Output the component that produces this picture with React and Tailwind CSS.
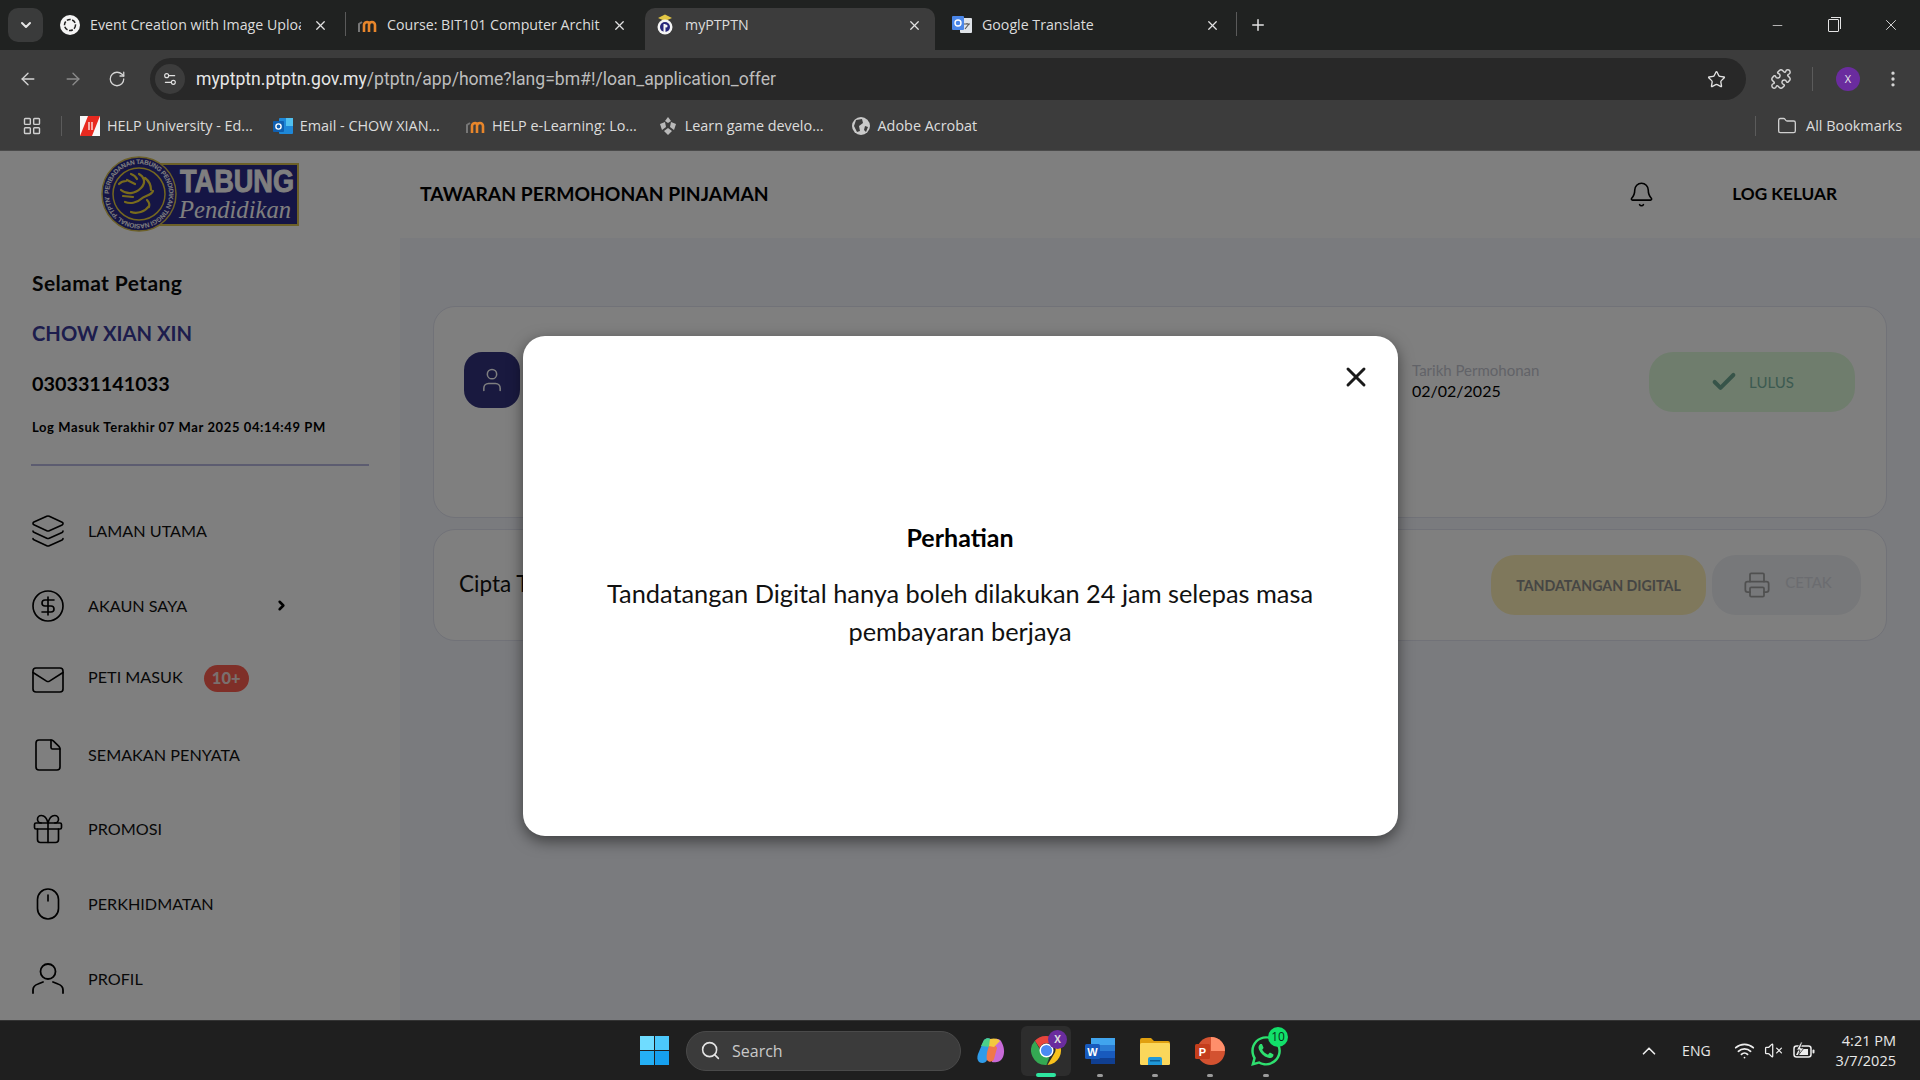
import {
  ArrowLeft, ArrowRight, Bell, Check, ChevronDown, ChevronRight, ChevronUp, CircleDollarSign,
  File, Folder, Gift, Layers, LayoutGrid, Mail, Minus, MoreVertical, Mouse, Plus, Printer, Puzzle, RotateCw,
  Search, Settings2, Star, User, VolumeX, Wifi, X,
} from "lucide-react";
import { FaWhatsapp } from "react-icons/fa";

const uiFont = "font-['Open_Sans','Noto_Sans',sans-serif]";
const pageFont = "font-['Lato','Open_Sans',sans-serif]";

function OpenAiIcon() {
  return (
    <svg width="20" height="20" viewBox="0 0 20 20">
      <circle cx="10" cy="10" r="10" fill="#f4f4f4" />
      <circle cx="10" cy="10" r="5.5" fill="none" stroke="#222" strokeWidth="1.5" strokeDasharray="4 1.5" />
    </svg>
  );
}

function MoodleIcon() {
  return (
    <svg width="20" height="16" viewBox="0 0 20 16">
      <path d="M7 15V8a3 3 0 0 1 5.500-1.500M12 15V8a3 3 0 0 1 6 0v7" fill="none" stroke="#e8862b" strokeWidth="2.6" />
      <path d="M2 15V7l3-2" fill="none" stroke="#777" strokeWidth="2" />
    </svg>
  );
}

function PtptnIcon() {
  return (
    <svg width="20" height="22" viewBox="0 0 20 22">
      <path d="M3 4 L10 0.500 L17 4 L10 7Z" fill="#e2c644" />
      <circle cx="10" cy="13" r="7.500" fill="#f5f5f5" />
      <circle cx="10" cy="13" r="5" fill="#27267a" />
      <rect x="8.500" y="10" width="2" height="8" fill="#f5f5f5" />
      <circle cx="11" cy="12" r="1.600" fill="#f5f5f5" />
    </svg>
  );
}

function TranslateIcon() {
  return (
    <svg width="20" height="20" viewBox="0 0 20 20">
      <rect x="8" y="3" width="12" height="15" rx="1" fill="#dfe3e8" />
      <rect x="0" y="1" width="12" height="14" rx="1" fill="#4a86e8" />
      <circle cx="6" cy="8" r="3" fill="none" stroke="#fff" strokeWidth="1.400" />
      <path d="M12 9h6M15 8v1M13 14l4-5" stroke="#555" strokeWidth="1.100" fill="none" />
    </svg>
  );
}

function HelpIcon() {
  return (
    <svg width="20" height="20" viewBox="0 0 20 20">
      <rect width="20" height="20" fill="#f8f8f8" />
      <path d="M0 20 L8 0 H20 L12 20Z" fill="#e8291f" />
      <path d="M9 6v8M12 6v8" stroke="#fff" strokeWidth="1.200" />
    </svg>
  );
}

function OutlookIcon() {
  return (
    <svg width="20" height="20" viewBox="0 0 20 20">
      <rect x="6" y="2" width="14" height="16" rx="1" fill="#1e88d8" />
      <rect x="13" y="2" width="7" height="8" fill="#50c0ef" />
      <rect x="0" y="5" width="11" height="11" rx="1" fill="#0f5fb0" />
      <circle cx="5.500" cy="10.500" r="2.600" fill="none" stroke="#fff" strokeWidth="1.400" />
    </svg>
  );
}

function UnityIcon() {
  return (
    <svg width="20" height="20" viewBox="0 0 20 20" fill="#b9b9b9">
      <path d="M10 1 L13 5 L10 7 L7 5Z M2 8 L7 6 L8 11 L4 14Z M18 8 L13 6 L12 11 L16 14Z M10 19 L6 15 L10 12 L14 15Z" />
    </svg>
  );
}

function GlobeIcon() {
  return (
    <svg width="20" height="20" viewBox="0 0 20 20">
      <circle cx="10" cy="10" r="9" fill="#c9c9c9" />
      <path d="M5 4 L11 3 L12 7 L8 10 L9 15 L6 16 L3 10Z M14 10 L17 11 L15 16 L13 14Z" fill="#3c3c3c" />
    </svg>
  );
}

function Tab({ icon, title, active, separator, className }) {
  return (
    <div
      className={`relative flex h-[42px] shrink-0 items-center pb-[8px] pl-[15px] pr-[17px] ${active ? "rounded-t-[10px] bg-[#3c3c3c]" : ""} ${className}`}
    >
      <span className="flex w-[20px] justify-center">{icon}</span>
      <span className="ml-[10px] min-w-0 flex-1 overflow-hidden whitespace-nowrap text-[14.2px] text-[#dcdcdc]">{title}</span>
      <X size={15} strokeWidth={2} className="ml-[12px] shrink-0 text-[#e2e2e2]" />
      {separator && <span className="absolute right-[-1px] top-[4px] h-[24px] w-px bg-[#5a5a5a]" />}
    </div>
  );
}

function TabStrip() {
  return (
    <div className={`flex h-[50px] shrink-0 items-end bg-[#202221] ${uiFont}`}>
      <div className="mb-[8px] ml-[8px] flex h-[34px] w-[35px] items-center justify-center rounded-[10px] bg-[#3a3b3b]">
        <ChevronDown size={16} strokeWidth={3} className="text-[#e6e6e6]" />
      </div>
      <Tab icon={<OpenAiIcon />} title="Event Creation with Image Upload" separator className="ml-[2px] w-[300px]" />
      <Tab icon={<MoodleIcon />} title="Course: BIT101 Computer Architecture" className="w-[299px] !pl-[12px]" />
      <Tab icon={<PtptnIcon />} title="myPTPTN" active className="ml-[1px] w-[290px] !pl-[10px] !pr-[13px]" />
      <Tab icon={<TranslateIcon />} title="Google Translate" separator className="w-[301px] !pl-[17px] !pr-[16px]" />
      <Plus size={18} strokeWidth={2} className="mb-[16px] ml-[13px] text-[#e2e2e2]" />
      <div className="flex-1" />
      <div className="mb-[16px] mr-[20px] flex items-center gap-[43px] text-[#e4e4e4]">
        <Minus size={15} strokeWidth={1.2} />
        <div className="relative h-[13px] w-[11px] rounded-[1px] border border-[#e4e4e4] after:absolute after:left-[2px] after:top-[-3px] after:h-[12px] after:w-[10px] after:border-r after:border-t after:border-[#e4e4e4]" />
        <X size={18} strokeWidth={1.2} />
      </div>
    </div>
  );
}

function Toolbar() {
  return (
    <div className={`flex h-[58px] shrink-0 items-start bg-[#3c3c3c] pt-[8px] ${uiFont}`}>
      <div className="flex h-[42px] items-center gap-[25px] pl-[18px] text-[#d5d5d5]">
        <ArrowLeft size={20} strokeWidth={1.6} />
        <ArrowRight size={20} strokeWidth={1.6} className="text-[#8b8b8b]" />
        <RotateCw size={18} strokeWidth={1.7} />
      </div>
      <div className="ml-[24px] flex h-[42px] w-[1596px] items-center rounded-full bg-[#282828] pl-[5px] pr-[20px]">
        <span className="flex h-[30px] w-[30px] items-center justify-center rounded-full bg-[#3c3c3c]">
          <Settings2 size={16} strokeWidth={1.7} className="text-[#e2e2e2]" />
        </span>
        <span className="ml-[11px] mt-[1px] flex-1 font-['Roboto',sans-serif] text-[17.6px] text-[#e6e6e6]">
          myptptn.ptptn.gov.my<span className="text-[#bdbdbd]">/ptptn/app/home?lang=bm#!/loan_application_offer</span>
        </span>
        <Star size={19} strokeWidth={1.7} className="text-[#e2e2e2]" />
      </div>
      <div className="flex h-[42px] flex-1 items-center pl-[24px] text-[#d5d5d5]">
        <Puzzle size={22} strokeWidth={1.6} />
        <span className="ml-[20px] h-[24px] w-px bg-[#5b5b5b]" />
        <span className="ml-[23px] flex h-[24px] w-[24px] items-center justify-center rounded-full bg-[#6a2c9e] text-[11px] text-[#e8e8e8]">X</span>
        <MoreVertical size={20} strokeWidth={2} className="ml-[23px]" />
      </div>
    </div>
  );
}

function Bookmark({ icon, label, className }) {
  return (
    <div className={`flex items-center gap-[7px] ${className}`}>
      {icon}
      <span className="whitespace-nowrap text-[14.4px] text-[#dcdcdc]">{label}</span>
    </div>
  );
}

function BookmarksBar() {
  return (
    <div className={`flex h-[43px] shrink-0 items-start border-b border-[#4a4a4a] bg-[#3c3c3c] ${uiFont}`}>
      <div className="flex h-[36px] items-center">
        <LayoutGrid size={20} strokeWidth={1.7} className="ml-[22px] text-[#cfcfcf]" />
        <span className="ml-[19px] h-[20px] w-px bg-[#5b5b5b]" />
        <Bookmark icon={<HelpIcon />} label="HELP University - Ed..." className="ml-[18px]" />
        <Bookmark icon={<OutlookIcon />} label="Email - CHOW XIAN..." className="ml-[20px]" />
        <Bookmark icon={<MoodleIcon />} label="HELP e-Learning: Lo..." className="ml-[25px]" />
        <Bookmark icon={<UnityIcon />} label="Learn game develo..." className="ml-[21px]" />
        <Bookmark icon={<GlobeIcon />} label="Adobe Acrobat" className="ml-[27px]" />
      </div>
      <div className="flex-1" />
      <div className="flex h-[36px] items-center pr-[18px]">
        <span className="mr-[21px] h-[20px] w-px bg-[#5b5b5b]" />
        <Folder size={20} strokeWidth={1.6} className="mr-[9px] text-[#cfcfcf]" />
        <span className="text-[14.4px] text-[#dcdcdc]">All Bookmarks</span>
      </div>
    </div>
  );
}

function Logo() {
  return (
    <svg width="198" height="76" viewBox="0 0 198 76">
      <defs>
        <path id="ring" d="M38 38 m-30 0 a30 30 0 1 1 60 0 a30 30 0 1 1 -60 0" />
      </defs>
      <rect x="60" y="8" width="137" height="61" fill="#2b2a8a" stroke="#d8c050" strokeWidth="2" />
      <text x="79" y="36" fontFamily="Liberation Sans, sans-serif" fontWeight="700" fontSize="31" fill="#fff" stroke="#fff" strokeWidth="0.9" textLength="114" lengthAdjust="spacingAndGlyphs">TABUNG</text>
      <text x="78" y="62" fontFamily="Liberation Serif, serif" fontStyle="italic" fontSize="25" fill="#fff" textLength="112" lengthAdjust="spacingAndGlyphs">Pendidikan</text>
      <circle cx="38" cy="38" r="37" fill="#2b2a8a" stroke="#d8c050" strokeWidth="1.500" />
      <circle cx="38" cy="38" r="26" fill="#2b2a8a" stroke="#e6cc40" strokeWidth="1.500" />
      <text fontFamily="Liberation Sans, sans-serif" fontWeight="700" fontSize="6.500" fill="#fff" textLength="186">
        <textPath href="#ring">PERBADANAN TABUNG PENDIDIKAN TINGGI NASIONAL 'PTPTN'</textPath>
      </text>
      <path d="M20 34c6 5 14 4 20-2s2-12-2-14M24 46c5 2 12 1 16-3s10-3 12-8M30 56c6 2 14 0 18-6M44 22c4 3 6 8 6 12M26 24l8 4M22 40l10 1M30 18c3 1 5 3 6 5M46 44c2 2 3 4 2 7M18 28c2-2 4-3 7-3" fill="none" stroke="#f3d73a" strokeWidth="2.200" strokeLinecap="round" />
    </svg>
  );
}

function ProfileIcon() {
  return (
    <svg width="32" height="32" viewBox="0 0 32 32" fill="none" stroke="#000" strokeWidth="1.800" className="shrink-0">
      <circle cx="16" cy="9.500" r="7.500" />
      <path d="M1 31v-3c0-3 2-5 5-6l5-2M31 31v-3c0-3-2-5-5-6l-5-2" strokeLinecap="round" />
    </svg>
  );
}

const menu = [
  { icon: Layers, label: "LAMAN UTAMA" },
  { icon: CircleDollarSign, label: "AKAUN SAYA", chevron: true },
  { icon: Mail, label: "PETI MASUK", badge: "10+" },
  { icon: File, label: "SEMAKAN PENYATA" },
  { icon: Gift, label: "PROMOSI" },
  { icon: Mouse, label: "PERKHIDMATAN" },
];

function Sidebar() {
  return (
    <aside className="w-[400px] shrink-0 bg-white pl-[32px] pt-[33px]">
      <p className="text-[21px] font-bold leading-[24px] tracking-[0.4px] text-[#0a0a0a]">Selamat Petang</p>
      <p className="mt-[26px] text-[20.2px] font-bold leading-[24px] text-[#3b3b9a]">CHOW XIAN XIN</p>
      <p className="mt-[26px] text-[19.8px] font-bold leading-[24px] text-black">030331141033</p>
      <p className="mt-[24px] text-[13px] font-bold leading-[16px] tracking-[0.6px] text-black">Log Masuk Terakhir 07 Mar 2025 04:14:49 PM</p>
      <div className="ml-[-1px] mt-[29px] h-[2px] w-[338px] bg-[#b9b9e0]" />
      <nav className="mt-[28px] flex flex-col">
        {menu.map(({ icon: Icon, label, chevron, badge }) => (
          <div key={label} className="flex h-[74.5px] items-center">
            <Icon size={36} strokeWidth={1.1} className="ml-[-2px] shrink-0 text-black" />
            <span className={`ml-[22px] text-[16.2px] text-[#111] ${badge ? "mt-[-6px]" : ""}`}>{label}</span>
            {chevron && <ChevronRight size={15} strokeWidth={4} className="ml-[87px] text-black" />}
            {badge && (
              <span className="ml-[21px] mt-[-4px] flex h-[27px] w-[45px] items-center justify-center rounded-full bg-[#ff5f50] text-[16.5px] font-black text-[#f5dfdc]">
                {badge}
              </span>
            )}
          </div>
        ))}
        <div className="flex h-[74.5px] items-center">
          <ProfileIcon />
          <span className="ml-[24px] mt-[2px] text-[16.2px] text-[#111]">PROFIL</span>
        </div>
      </nav>
    </aside>
  );
}

function Content() {
  return (
    <main className="flex flex-1 flex-col gap-[11px] bg-[#f4f6fc] pl-[33px] pr-[33px] pt-[68px]">
      <section className="flex h-[212px] items-start rounded-[22px] border border-[#e2e4f0] bg-white pl-[30px] pr-[31px] pt-[45px]">
        <div className="flex h-[56px] w-[56px] items-center justify-center rounded-[18px] bg-[#32327e]">
          <User size={28} strokeWidth={1.3} className="text-white" />
        </div>
        <div className="ml-[892px] mt-[8px] w-[237px]">
          <p className="text-[15px] leading-[20px] text-[#c4c6d0]">Tarikh Permohonan</p>
          <p className="text-[16px] leading-[21px] text-black">02/02/2025</p>
        </div>
        <div className="flex h-[60px] w-[206px] items-center justify-center gap-[11px] rounded-[24px] bg-[#dffadb]">
          <Check size={28} strokeWidth={3.5} className="text-[#6fa893]" />
          <span className="text-[15px] text-[#78b5a2]">LULUS</span>
        </div>
      </section>
      <section className="flex h-[112px] items-center rounded-[22px] border border-[#e2e4f0] bg-white pl-[25px] pr-[25px]">
        <p className="mt-[-2px] text-[22.5px] text-[#111]">Cipta Tandatangan Digital</p>
        <div className="flex-1" />
        <div className="flex h-[60px] w-[215px] items-center justify-center rounded-[24px] bg-[#fff0b8] pt-[1px] text-[14.2px] font-bold text-[#8c8c88]">
          TANDATANGAN DIGITAL
        </div>
        <div className="ml-[6px] flex h-[60px] w-[149px] items-center justify-center gap-[14px] rounded-[24px] bg-[#eef0f4]">
          <Printer size={28} strokeWidth={1.5} className="ml-[2px] text-[#a0a0a0]" />
          <span className="mt-[-5px] text-[15px] text-[#d6d9e0]">CETAK</span>
        </div>
      </section>
    </main>
  );
}

function Modal() {
  return (
    <div className="absolute inset-0 z-10 flex items-center justify-center bg-black/50">
      <div className="relative flex h-[500px] w-[875px] flex-col items-center rounded-[22px] bg-white px-[60px] pt-[184px] shadow-[0_5px_15px_rgba(0,0,0,0.5)]">
        <button className="absolute right-[26px] top-[25px] text-[#1a1a1a]">
          <X size={32} strokeWidth={2.2} />
        </button>
        <h2 className="text-[25px] font-bold leading-[34px] text-black">Perhatian</h2>
        <p className="mt-[20px] text-center text-[25.35px] leading-[38px] text-[#111]">
          Tandatangan Digital hanya boleh dilakukan 24 jam selepas masa pembayaran berjaya
        </p>
      </div>
    </div>
  );
}

function WebPage() {
  return (
    <div className={`relative flex min-h-0 flex-1 flex-col overflow-hidden bg-white ${pageFont}`}>
      <header className="flex h-[87px] shrink-0 items-center">
        <div className="ml-[101px] mt-[-2px]">
          <Logo />
        </div>
        <h1 className="ml-[121px] mt-[-1px] text-[19.300px] font-bold text-black">TAWARAN PERMOHONAN PINJAMAN</h1>
        <div className="flex-1" />
        <Bell size={27} strokeWidth={1.4} className="text-black" />
        <span className="ml-[77px] mr-[83px] mt-[-1px] text-[17.2px] font-bold text-black">LOG KELUAR</span>
      </header>
      <div className="flex min-h-0 flex-1">
        <Sidebar />
        <Content />
      </div>
      <Modal />
    </div>
  );
}

function WindowsLogo() {
  return (
    <div className="grid h-[29px] w-[29px] grid-cols-2 gap-[1.5px]">
      <span className="bg-[#6fdcff]" />
      <span className="bg-[#4cc8fb]" />
      <span className="bg-[#25b0f5]" />
      <span className="bg-[#16a0ef]" />
    </div>
  );
}

function CopilotIcon() {
  return (
    <svg width="30" height="30" viewBox="0 0 30 30">
      <path d="M8 4c3-3 7-2 8 1L11 24c-1 3-5 4-8 2-2-2-2-5-1-8Z" fill="#2f9be8" />
      <path d="M8 4c3-3 7-2 8 1l-2 6-9-1Z" fill="#4cd08a" />
      <path d="M16 5c1-3 7-3 9 0 3 5 4 11 2 16-2 5-8 6-11 5Z" fill="#c86ad8" />
      <path d="M13 10c3-2 7-1 8 2l-3 11c-1 3-5 4-7 1-1-3 0-9 2-14Z" fill="#f0784a" />
      <path d="M14 3c3-1 8-1 10 2l-6 6-5-1Z" fill="#f3c93e" />
    </svg>
  );
}

function ChromeIcon() {
  return (
    <svg width="31" height="31" viewBox="0 0 32 32">
      <path d="M16 1a15 15 0 0 1 13 7.500H16a7.500 7.500 0 0 0-7 5L4 6a15 15 0 0 1 12-5Z" fill="#e8453c" />
      <path d="M29 8.500a15 15 0 0 1-12 22.500l6.500-11a7.500 7.500 0 0 0-1-11Z" fill="#f8c11c" />
      <path d="M4 6l7 12a7.500 7.500 0 0 0 8 5l-3 8A15 15 0 0 1 4 6Z" fill="#34a853" />
      <circle cx="16" cy="16" r="6.500" fill="#4a8af4" stroke="#fff" strokeWidth="1.500" />
    </svg>
  );
}

function WordIcon() {
  return (
    <svg width="30" height="30" viewBox="0 0 30 30">
      <rect x="6" y="2" width="24" height="26" rx="2" fill="#2b7cd3" />
      <rect x="6" y="2" width="24" height="7" fill="#41a5ee" />
      <rect x="6" y="15" width="24" height="7" fill="#185abd" />
      <rect x="6" y="22" width="24" height="6" fill="#103f91" />
      <rect x="0" y="8" width="15" height="15" rx="1.500" fill="#185abd" />
      <text x="7.500" y="20" textAnchor="middle" fontFamily="Liberation Sans, sans-serif" fontWeight="700" fontSize="11" fill="#fff">W</text>
    </svg>
  );
}

function FilesIcon() {
  return (
    <svg width="30" height="28" viewBox="0 0 30 28">
      <path d="M0 3a2 2 0 0 1 2-2h9l3 3h14a2 2 0 0 1 2 2v4H0Z" fill="#e0a010" />
      <rect y="6" width="30" height="22" rx="1.500" fill="#fbd75b" />
      <path d="M8 28v-6a2 2 0 0 1 2-2h10a2 2 0 0 1 2 2v6Z" fill="#1f98d8" />
      <rect x="10" y="23" width="10" height="1.500" fill="#0c5c92" />
    </svg>
  );
}

function PowerPointIcon() {
  return (
    <svg width="30" height="30" viewBox="0 0 30 30">
      <circle cx="16" cy="15" r="14" fill="#d35230" />
      <path d="M16 1a14 14 0 0 1 14 14H16Z" fill="#ff8f6b" />
      <rect x="0" y="8" width="15" height="15" rx="1.500" fill="#c43e1c" />
      <text x="7.500" y="20" textAnchor="middle" fontFamily="Liberation Sans, sans-serif" fontWeight="700" fontSize="11" fill="#fff">P</text>
    </svg>
  );
}

function BatteryIcon() {
  return (
    <svg width="22" height="18" viewBox="0 0 22 18" fill="none" className="ml-[10px]">
      <rect x="1" y="4" width="17" height="11" rx="2.500" stroke="#eee" strokeWidth="1.500" />
      <rect x="19.500" y="7.500" width="2" height="4" rx="1" fill="#eee" />
      <path d="M3 13l3-6h9v6Z" fill="#eee" />
      <path d="M8 0 L3.500 8 H7 L5.500 13 L11 6 H7.500 L9.500 0Z" fill="#eee" stroke="#1f1f1f" strokeWidth="0.800" />
    </svg>
  );
}

function TaskIcon({ children, running, className }) {
  return (
    <div className={`relative flex h-[50px] w-[50px] items-center justify-center ${className}`}>
      {children}
      {running && <span className="absolute bottom-[-1px] left-1/2 h-[3px] w-[6px] -translate-x-1/2 rounded-full bg-[#9b9b9b]" />}
    </div>
  );
}

function Taskbar() {
  return (
    <footer className={`flex h-[60px] shrink-0 items-center border-t border-[#333] bg-[#1f1f1f] ${uiFont}`}>
      <div className="ml-[640px]">
        <WindowsLogo />
      </div>
      <div className="ml-[17px] flex h-[40px] w-[275px] items-center rounded-full border border-[#4a4a4a] bg-[#3b3b3b] pl-[13px]">
        <Search size={21} strokeWidth={1.8} className="text-[#e4e4e4]" />
        <span className="ml-[11px] text-[16px] text-[#c9c9c9]">Search</span>
      </div>
      <TaskIcon className="ml-[5px]">
        <CopilotIcon />
      </TaskIcon>
      <TaskIcon className="ml-[5px] rounded-[6px] bg-[#2d2d2d]">
        <ChromeIcon />
        <span className="absolute right-[4px] top-[4px] flex h-[19px] w-[19px] items-center justify-center rounded-full bg-[#6a2c9e] text-[10px] font-bold text-[#ddd]">X</span>
        <span className="absolute bottom-[-1px] left-1/2 h-[4px] w-[20px] -translate-x-1/2 rounded-full bg-[#2ee6a0]" />
      </TaskIcon>
      <TaskIcon running className="ml-[4px]">
        <WordIcon />
      </TaskIcon>
      <TaskIcon running className="ml-[5px]">
        <FilesIcon />
      </TaskIcon>
      <TaskIcon running className="ml-[5px]">
        <PowerPointIcon />
      </TaskIcon>
      <TaskIcon running className="ml-[6px]">
        <FaWhatsapp size={34} className="text-[#2ee06f]" />
        <span className="absolute right-[3px] top-[1px] flex h-[20px] w-[20px] items-center justify-center rounded-full bg-[#12e06a] text-[12px] text-[#06301a]">10</span>
      </TaskIcon>
      <div className="flex-1" />
      <ChevronUp size={22} strokeWidth={1.8} className="text-[#eeeeee]" />
      <span className="ml-[22px] text-[14px] text-[#e8e8e8]">ENG</span>
      <Wifi size={21} strokeWidth={2} className="ml-[23px] text-[#eeeeee]" />
      <VolumeX size={19} strokeWidth={1.6} className="ml-[9px] text-[#eeeeee]" />
      <BatteryIcon />
      <div className="ml-[21px] mr-[24px] text-right text-[14.5px] leading-[20px] text-[#e8e8e8]">
        <p>4:21 PM</p>
        <p>3/7/2025</p>
      </div>
    </footer>
  );
}

export default function App() {
  return (
    <div className="flex h-screen w-screen flex-col overflow-hidden">
      <TabStrip />
      <Toolbar />
      <BookmarksBar />
      <WebPage />
      <Taskbar />
    </div>
  );
}
